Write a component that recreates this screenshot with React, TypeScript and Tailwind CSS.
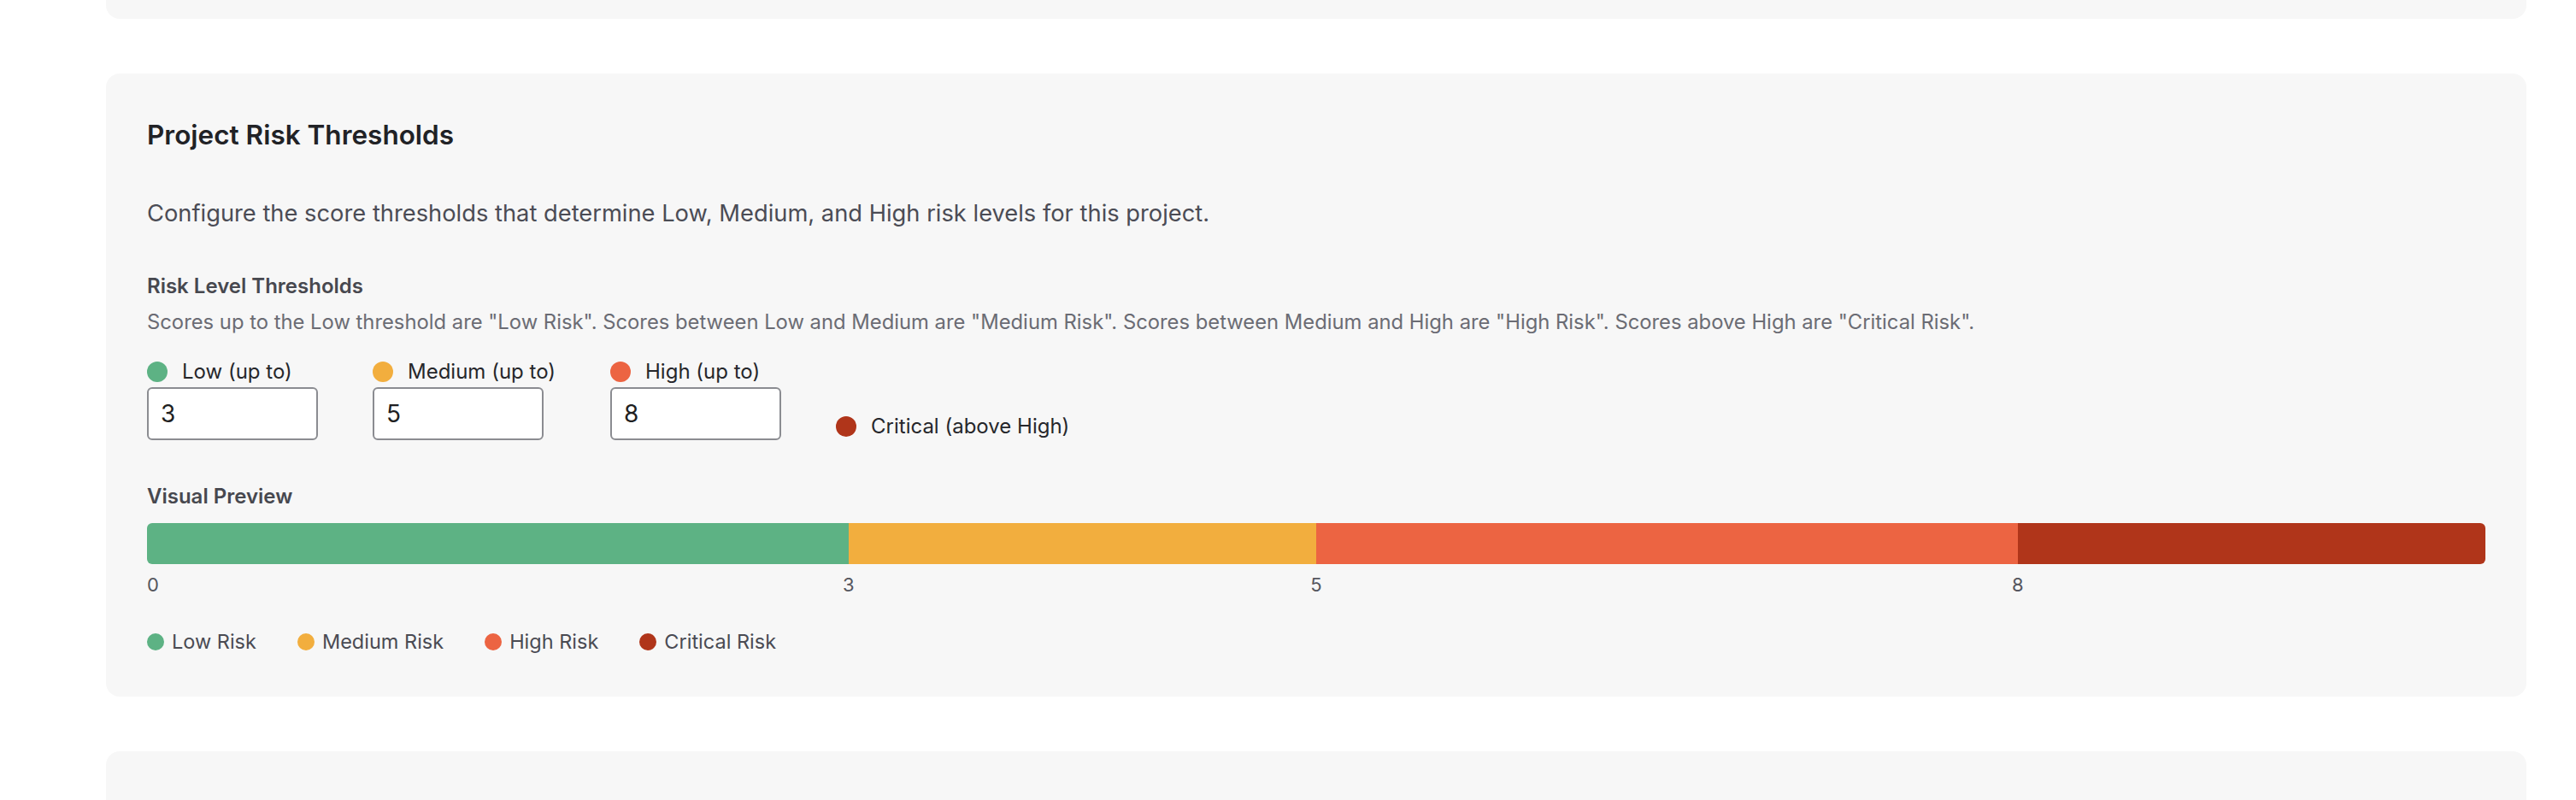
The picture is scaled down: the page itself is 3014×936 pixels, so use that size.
import React from "react";

const MAX = 10;
const thresholds = { low: 3, medium: 5, high: 8 };

const GREEN = "bg-[#5db284]";
const YELLOW = "bg-[#f2ae3e]";
const ORANGE = "bg-[#ec6442]";
const RED = "bg-[#b0351a]";

function ThresholdField({ dot, label, value }: { dot: string; label: string; value: number }) {
  return (
    <div className="flex flex-col">
      <div className="flex items-center gap-[17px] h-[36px] leading-[36px] text-[24px] text-[#26272b] whitespace-nowrap">
        <span className={`w-[24px] h-[24px] rounded-full ${dot} shrink-0`} />
        <span>{label}</span>
      </div>
      <input
        type="text"
        defaultValue={String(value)}
        className="w-[200px] h-[62px] border-2 border-[#8b8c91] rounded-[6px] bg-white pl-[14px] text-[28px] text-[#1f1f22] outline-none"
        style={{ fontFamily: "Inter, 'Noto Sans', sans-serif" }}
      />
    </div>
  );
}

function LegendItem({ dot, label }: { dot: string; label: string }) {
  return (
    <div className="flex items-center gap-[9px] text-[23.5px] leading-[32px] text-[#4a4b53]">
      <span className={`w-[20px] h-[20px] rounded-full ${dot}`} />
      <span>{label}</span>
    </div>
  );
}

export default function App() {
  const seg = [
    { from: 0, to: thresholds.low, color: GREEN },
    { from: thresholds.low, to: thresholds.medium, color: YELLOW },
    { from: thresholds.medium, to: thresholds.high, color: ORANGE },
    { from: thresholds.high, to: MAX, color: RED },
  ];
  const ticks = [0, thresholds.low, thresholds.medium, thresholds.high];

  return (
    <div
      className="min-h-[936px] bg-white pl-[124px] pr-[58px] overflow-hidden"
      style={{ fontFamily: "Inter, 'Noto Sans', sans-serif" }}
    >
      <div className="h-[22px] bg-[#f7f7f7] rounded-b-2xl" />

      <div className="mt-[64px] bg-[#f7f7f7] rounded-2xl px-[48px] pt-[50px] pb-[48px]">
        <h2 className="text-[31.5px] leading-[44px] font-semibold text-[#212226]">Project Risk Thresholds</h2>

        <p className="mt-[50px] text-[27.3px] leading-[40px] text-[#4b4c55]">
          Configure the score thresholds that determine Low, Medium, and High risk levels for this project.
        </p>

        <h3 className="mt-[49px] text-[24px] leading-[32px] font-semibold text-[#47484f]">Risk Level Thresholds</h3>
        <p className="mt-[12px] text-[23.8px] leading-[28px] text-[#6b6c74]">
          Scores up to the Low threshold are "Low Risk". Scores between Low and Medium are "Medium Risk". Scores between Medium and High are "High Risk". Scores above High are "Critical Risk".
        </p>

        <div className="mt-[26px] flex items-end gap-[64px]">
          <ThresholdField dot={GREEN} label="Low (up to)" value={thresholds.low} />
          <ThresholdField dot={YELLOW} label="Medium (up to)" value={thresholds.medium} />
          <ThresholdField dot={ORANGE} label="High (up to)" value={thresholds.high} />
          <div className="flex items-center gap-[17px] h-[36px] leading-[36px] text-[24px] text-[#26272b] whitespace-nowrap mb-[-2px]">
            <span className={`w-[24px] h-[24px] rounded-full ${RED}`} />
            <span>Critical (above High)</span>
          </div>
        </div>

        <h3 className="mt-[50px] text-[24px] leading-[32px] font-semibold text-[#47484f]">Visual Preview</h3>

        <div className="mt-[15px] flex h-[48px] rounded-md overflow-hidden">
          {seg.map((s, i) => (
            <div key={i} className={s.color} style={{ width: `${((s.to - s.from) / MAX) * 100}%` }} />
          ))}
        </div>

        <div className="relative mt-[10px] h-[28px] text-[22px] leading-[28px] text-[#55565e]">
          {ticks.map((t) => (
            <span
              key={t}
              className="absolute top-0"
              style={{
                left: `${(t / MAX) * 100}%`,
                transform: t === 0 ? "none" : "translateX(-50%)",
              }}
            >
              {t}
            </span>
          ))}
        </div>

        <div className="mt-[37px] flex items-center gap-[48px]">
          <LegendItem dot={GREEN} label="Low Risk" />
          <LegendItem dot={YELLOW} label="Medium Risk" />
          <LegendItem dot={ORANGE} label="High Risk" />
          <LegendItem dot={RED} label="Critical Risk" />
        </div>
      </div>

      <div className="mt-[64px] h-[120px] bg-[#f7f7f7] rounded-2xl" />
    </div>
  );
}
